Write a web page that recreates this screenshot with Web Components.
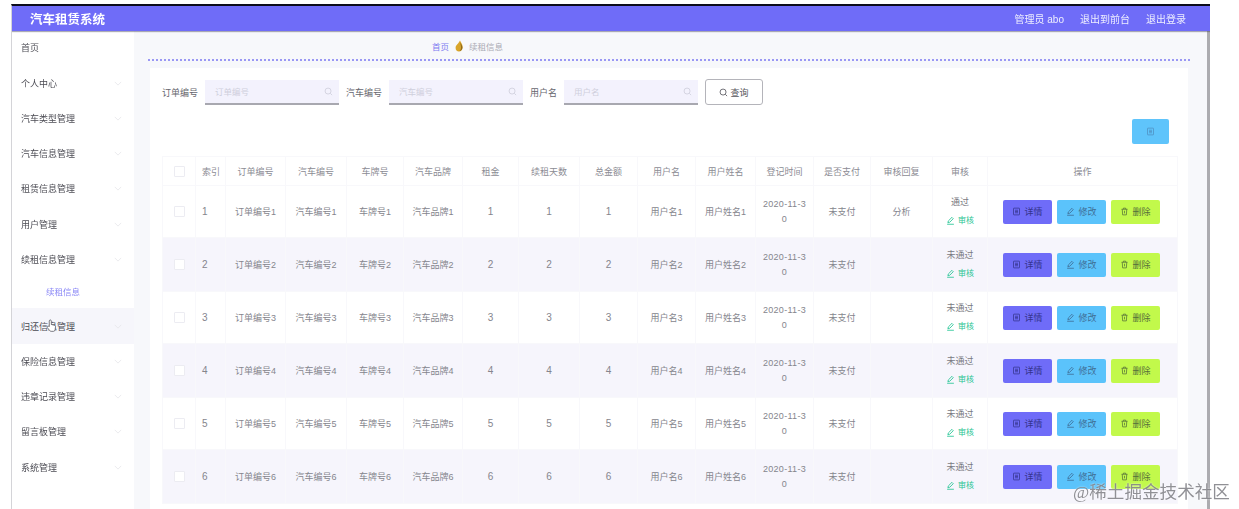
<!DOCTYPE html>
<html lang="zh">
<head>
<meta charset="utf-8">
<title>汽车租赁系统</title>
<style>
    html, body { margin: 0; height: 100%; overflow: hidden; background: #fff; }
    body { font-family: "Liberation Sans", "Noto Sans CJK SC", sans-serif; font-size: 9px; }
</style>
</head>
<body>
<app-shell>
    <top-bar title-text="汽车租赁系统" slot="top">
        <span>管理员 abo</span>
        <span>退出到前台</span>
        <span>退出登录</span>
    </top-bar>
    <side-menu slot="side">
        <menu-row first>首页</menu-row>
        <menu-row arrow>个人中心</menu-row>
        <menu-row arrow>汽车类型管理</menu-row>
        <menu-row arrow>汽车信息管理</menu-row>
        <menu-row arrow>租赁信息管理</menu-row>
        <menu-row arrow>用户管理</menu-row>
        <menu-row arrow>续租信息管理</menu-row>
        <menu-row sub>续租信息</menu-row>
        <menu-row arrow hover>归还信息管理</menu-row>
        <menu-row arrow>保险信息管理</menu-row>
        <menu-row arrow>违章记录管理</menu-row>
        <menu-row arrow>留言板管理</menu-row>
        <menu-row arrow>系统管理</menu-row>
    </side-menu>
    <bread-crumb></bread-crumb>
    <content-card>
        <search-bar></search-bar>
        <data-table></data-table>
    </content-card>
</app-shell>
<water-mark>@稀土掘金技术社区</water-mark>

<script>
const ICONS = {
    search: '<svg viewBox="0 0 12 12" width="9" height="9" fill="none" stroke="currentColor" stroke-width="1.1"><circle cx="5.4" cy="5.4" r="4"/><path d="M8.4 8.4l2.4 2.4"/></svg>',
    list: '<svg viewBox="0 0 12 12" width="9" height="9" fill="none" stroke="currentColor" stroke-width="1"><rect x="2" y="1.5" width="8" height="9" rx=".6"/><path d="M4 4.3h4M4 6h4M4 7.7h4"/></svg>',
    edit: '<svg viewBox="0 0 12 12" width="9" height="9" fill="none" stroke="currentColor" stroke-width="1.1"><path d="M2.5 9l.6-2.4L7.9 1.8l1.8 1.8-4.8 4.8zM1.5 11h9"/></svg>',
    trash: '<svg viewBox="0 0 12 12" width="9" height="9" fill="none" stroke="currentColor" stroke-width="1"><path d="M2 3h8M4.5 3V1.5h3V3M3 3l.5 7.5h5L9 3M6 5v3.5"/></svg>'
};

class AppShell extends HTMLElement {
    constructor() {
        super();
        this.attachShadow({ mode: "open" });
        this.shadowRoot.innerHTML = `
            <style>
                :host { display: block; height: 509px; padding: 4px 29px 0 11px; box-sizing: border-box; overflow: hidden; filter: blur(.72px); }
                .frame { height: 505px; display: flex; flex-direction: column; border-top: 2px solid #0c0c1c; border-left: 1px solid #d4d4d8; overflow: hidden; }
                .body { flex: 1; display: flex; min-height: 0; }
                .side { flex: none; width: 122px; }
                .main { flex: 1; min-width: 0; background: #f7f8fb; border-right: 3px solid #acacb0; overflow: hidden; }
            </style>
            <div class="frame">
                <slot name="top"></slot>
                <div class="body">
                    <div class="side"><slot name="side"></slot></div>
                    <div class="main"><slot></slot></div>
                </div>
            </div>
        `;
    }
}

class TopBar extends HTMLElement {
    constructor() {
        super();
        this.attachShadow({ mode: "open" });
        this.shadowRoot.innerHTML = `
            <style>
                :host { display: flex; align-items: center; justify-content: space-between; height: 25px; padding: 0 24px 0 18px; background: #6f6cf8; color: #fff; box-shadow: 0 1px 1px rgba(70,70,90,.45); position: relative; }
                .title { font-size: 12.5px; font-weight: 700; }
                nav { display: flex; gap: 16px; font-size: 10px; color: #eeeefe; }
            </style>
            <div class="title"></div>
            <nav><slot></slot></nav>
        `;
        this.shadowRoot.querySelector(".title").textContent = this.getAttribute("title-text");
    }
}

class SideMenu extends HTMLElement {
    constructor() {
        super();
        this.attachShadow({ mode: "open" });
        this.shadowRoot.innerHTML = `
            <style>
                :host { display: block; height: 100%; background: #fff; }
            </style>
            <slot></slot>
        `;
    }
}

class MenuRow extends HTMLElement {
    constructor() {
        super();
        this.attachShadow({ mode: "open" });
        const arrow = this.hasAttribute("arrow") ? '<svg class="arrow" viewBox="0 0 10 6" width="8" height="5" fill="none" stroke="#e6e6ea" stroke-width="1"><path d="M1 1l4 4 4-4"/></svg>' : "";
        const hand = this.hasAttribute("hover") ? '<svg class="hand" viewBox="0 0 14 16" width="12" height="15"><path d="M5 1.5c.8 0 1.2.6 1.2 1.3v4l3.4.8c1 .2 1.6 1 1.5 2l-.5 3.6c-.1.9-.9 1.6-1.8 1.6H6c-.6 0-1.1-.3-1.5-.7L1.6 10.600c-.5-.6-.4-1.300.1-1.700.5-.4 1.200-.3 1.700.1l.4.4V2.800C3.800 2.100 4.300 1.500 5 1.500z" fill="#fff" stroke="#55555f" stroke-width=".9"/></svg>' : "";
        this.shadowRoot.innerHTML = `
            <style>
                :host { display: flex; align-items: center; justify-content: space-between; position: relative; height: 35.25px; box-sizing: border-box; padding: 0 12px 0 9px; color: #4c4c54; font-size: 9px; }
                :host([first]) { height: 32px; margin-bottom: 2.4px; }
                :host([sub]) { height: 31.500px; padding: 0 0 3px 34px; color: #8a87f6; font-size: 8.500px; }
                :host([hover]) { background: #f6f6fb; }
                .hand { position: absolute; left: 34px; top: 10px; }
            </style>
            <span><slot></slot></span>${arrow}${hand}
        `;
    }
}

class BreadCrumb extends HTMLElement {
    constructor() {
        super();
        this.attachShadow({ mode: "open" });
        this.shadowRoot.innerHTML = `
            <style>
                :host { display: flex; align-items: center; gap: 6px; height: 30px; box-sizing: border-box; margin: 0 17px 0 14px; padding: 2px 0 0 284px; border-bottom: 2px dotted #9a98f4; font-size: 8.500px; color: #aaaab4; }
                b { font-weight: 400; color: #7d7af0; }
            </style>
            <b>首页</b>
            <svg viewBox="0 0 8 12" width="8" height="12"><path d="M5 .6c.5 1.500 2.700 3.700 2.700 6.600 0 2.600-1.700 4.300-3.700 4.300S.4 9.900.6 7.500C.8 5 3.600 3.800 5 .6z" fill="#d9a52a"/><path d="M5 2.500c.3 1.500 1.200 3.500 1 5.500-.1 1.300-.8 2.500-1.600 3 1.700-.1 3-1.700 3-3.800C7.400 5.400 5.800 4 5 2.500z" fill="#8f6a1c"/></svg>
            <span>续租信息</span>
        `;
    }
}

class ContentCard extends HTMLElement {
    constructor() {
        super();
        this.attachShadow({ mode: "open" });
        this.shadowRoot.innerHTML = `
            <style>
                :host { display: block; min-height: 480px; margin: 7px 19px 0 16px; padding: 11px 11px 0 12px; background: #fff; }
            </style>
            <slot></slot>
        `;
    }
}

class SearchBar extends HTMLElement {
    constructor() {
        super();
        this.attachShadow({ mode: "open" });
        const fields = [["订单编号", 35], ["汽车编号", 35], ["用户名", 26]];
        const html = fields.map(([name, w]) => `
            <label style="width:${w}px">${name}</label>
            <div class="input"><span>${name}</span>${ICONS.search}</div>
        `).join("");
        this.shadowRoot.innerHTML = `
            <style>
                :host { display: flex; align-items: center; height: 26px; color: #66666e; font-size: 9px; }
                label { flex: none; margin-right: 8px; white-space: nowrap; }
                .input { flex: none; display: flex; align-items: center; justify-content: space-between; width: 134px; height: 25px; box-sizing: border-box; margin-right: 7px; padding: 0 6px 0 10px; background: #f3f2fd; border-bottom: 2px solid #a8a8b0; color: #cfcfdc; font-size: 8.500px; }
                button { flex: none; display: flex; align-items: center; justify-content: center; gap: 2px; width: 58px; height: 26px; padding: 0; background: #fff; border: 1px solid #b4b4ba; border-radius: 3px; color: #55555c; font: inherit; }
            </style>
            ${html}
            <button>${ICONS.search}<span>查询</span></button>
        `;
    }
}

class DataTable extends HTMLElement {
    constructor() {
        super();
        this.attachShadow({ mode: "open" });
    }

    connectedCallback() {
        this.render();
    }

    render() {
        const widths = [33, 30, 60, 61, 57, 59, 56, 61, 58, 58, 60, 58, 57, 62, 55, 190];
        const heads = ["", "索引", "订单编号", "汽车编号", "车牌号", "汽车品牌", "租金", "续租天数", "总金额", "用户名", "用户姓名", "登记时间", "是否支付", "审核回复", "审核", "操作"];
        const rows = [1, 2, 3, 4, 5, 6].map((n) => `
            <tr>
                <td><i class="check"></i></td>
                <td class="idx">${n}</td>
                <td>订单编号${n}</td>
                <td>汽车编号${n}</td>
                <td>车牌号${n}</td>
                <td>汽车品牌${n}</td>
                <td class="num">${n}</td>
                <td class="num">${n}</td>
                <td class="num">${n}</td>
                <td>用户名${n}</td>
                <td>用户姓名${n}</td>
                <td class="date">2020-11-30</td>
                <td>未支付</td>
                <td>${n === 1 ? "分析" : ""}</td>
                <td><div class="state">${n === 1 ? "通过" : "未通过"}</div><div class="audit">${ICONS.edit}<span>审核</span></div></td>
                <td><div class="ops">
                    <span class="btn detail">${ICONS.list}详情</span>
                    <span class="btn change">${ICONS.edit}修改</span>
                    <span class="btn remove">${ICONS.trash}删除</span>
                </div></td>
            </tr>
        `).join("");
        this.shadowRoot.innerHTML = `
            <style>
                :host { display: block; color: #85858d; font-size: 9px; }
                .tools { display: flex; justify-content: flex-end; padding: 14px 8px 12px 0; }
                .tools span { display: flex; align-items: center; justify-content: center; width: 37px; height: 25px; background: #5fc4fb; border-radius: 2px; color: #4f8fc0; }
                table { width: 1015px; table-layout: fixed; border-collapse: collapse; }
                th, td { padding: 0 5px; text-align: center; font-weight: 400; border: 1px solid #f8f8fb; }
                th { height: 29px; box-sizing: border-box; color: #8c8c94; }
                tr { height: 52px; }
                thead tr { height: 29px; }
                tbody tr:nth-child(even) { height: 54px; background: #f6f5fc; }
                th:first-child, td:first-child { padding: 0; }
                th:nth-child(2), .idx { padding-left: 6px; text-align: left; }
                .idx, .num { font-size: 10px; }
                .check { display: inline-block; width: 9px; height: 9px; border: 1px solid #ececf2; border-radius: 1px; background: #fff; vertical-align: middle; }
                .date { line-height: 15px; letter-spacing: .3px; word-break: break-all; }
                .state { margin-top: -2px; color: #7a7a82; line-height: 15px; }
                .audit { display: flex; align-items: center; justify-content: center; gap: 3px; margin-top: 5px; font-size: 8px; line-height: 12px; color: #1fc492; }
                .ops { display: flex; justify-content: center; gap: 5px; margin-left: -2px; }
                .btn { display: flex; align-items: center; justify-content: center; gap: 3px; width: 49px; height: 24px; border-radius: 2px; color: #4c4c70; white-space: nowrap; }
                .detail { background: #6f6cf8; color: #34348c; }
                .change { background: #5bc3fb; color: #3f6f96; }
                .remove { background: #c2f94b; color: #55703a; }
            </style>
            <div class="tools"><span>${ICONS.list}</span></div>
            <table>
                <colgroup>${widths.map((w) => `<col style="width:${w}px">`).join("")}</colgroup>
                <thead><tr>${heads.map((h, i) => `<th>${i === 0 ? '<i class="check"></i>' : h}</th>`).join("")}</tr></thead>
                <tbody>${rows}</tbody>
            </table>
        `;
    }
}

class WaterMark extends HTMLElement {
    constructor() {
        super();
        this.attachShadow({ mode: "open" });
        this.shadowRoot.innerHTML = `
            <style>
                :host { position: absolute; left: 1073px; top: 481px; font-family: "Liberation Serif", "Noto Sans CJK SC", serif; font-size: 17.600px; line-height: 22px; color: rgba(125,125,130,.85); white-space: nowrap; text-shadow: 0 0 2px rgba(255,255,255,.8); }
            </style>
            <slot></slot>
        `;
    }
}

customElements.define("app-shell", AppShell);
customElements.define("top-bar", TopBar);
customElements.define("side-menu", SideMenu);
customElements.define("menu-row", MenuRow);
customElements.define("bread-crumb", BreadCrumb);
customElements.define("content-card", ContentCard);
customElements.define("search-bar", SearchBar);
customElements.define("data-table", DataTable);
customElements.define("water-mark", WaterMark);
</script>
</body>
</html>
